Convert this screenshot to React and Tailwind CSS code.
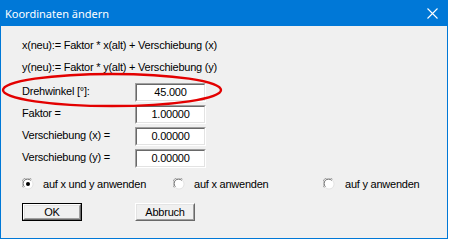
import React from "react";

function Field({ value }) {
  return (
    <div className="w-[71px] h-[19px] border border-t-[#a0a0a0] border-l-[#a0a0a0] border-b-white border-r-white">
      <div className="w-full h-full border border-t-[#696969] border-l-[#696969] border-b-[#e3e3e3] border-r-[#e3e3e3] bg-white flex items-center justify-center text-[11px] leading-none text-black">
        {value}
      </div>
    </div>
  );
}

function Radio({ checked }) {
  return (
    <svg width="12" height="12" viewBox="0 0 12 12" className="shrink-0">
      <circle cx="6" cy="6" r="5" fill="#ffffff" />
      <path d="M1.3 9.5 A5.5 5.5 0 0 1 9.5 1.3" fill="none" stroke="#a0a0a0" strokeWidth="1" />
      <path d="M2.4 8.7 A4.4 4.4 0 0 1 8.7 2.4" fill="none" stroke="#696969" strokeWidth="1" />
      <path d="M9.6 2.6 A4.4 4.4 0 0 1 2.6 9.6" fill="none" stroke="#e3e3e3" strokeWidth="1" />
      {checked && <circle cx="6" cy="6" r="2" fill="#000000" />}
    </svg>
  );
}

function Button({ label, isDefault }) {
  const inner = (
    <div className="w-full h-full border border-t-white border-l-white border-b-[#696969] border-r-[#696969]">
      <div className="w-full h-full border border-t-[#e3e3e3] border-l-[#e3e3e3] border-b-[#a0a0a0] border-r-[#a0a0a0] bg-[#f0f0f0] flex items-center justify-center text-[11px] leading-none text-black">
        {label}
      </div>
    </div>
  );
  return isDefault ? (
    <div className="w-[60px] h-[18px] border border-black">{inner}</div>
  ) : (
    <div className="w-[60px] h-[18px]">{inner}</div>
  );
}

function Row({ label, value }) {
  return (
    <div className="flex items-center h-[19px]">
      <div className="w-[113px] pb-[3px] leading-none">{label}</div>
      <Field value={value} />
    </div>
  );
}

export default function App() {
  return (
    <div className="w-[449px] h-[241px] bg-white">
      <div className="w-[448px] h-[239px] border border-[#0078d7] flex flex-col">
        <div className="h-[25px] bg-[#0078d7] flex items-center justify-between pl-[4px] pr-[9px] shrink-0">
          <span className="text-white text-[11px] leading-none pb-[1px]" style={{ fontFamily: '"Noto Sans", "Open Sans", sans-serif' }}>
            Koordinaten ändern
          </span>
          <svg width="11" height="11" viewBox="0 0 11 11">
            <path d="M0.5 0.5 L10.5 10.5 M10.5 0.5 L0.5 10.5" stroke="#ffffff" strokeWidth="1.1" />
          </svg>
        </div>
        <div
          className="flex-1 bg-[#f0f0f0] relative pl-[21px] flex flex-col text-[11px] tracking-[-0.23px] text-black"
          style={{ fontFamily: '"Liberation Sans", Arial, sans-serif' }}
        >
          <div className="h-[22px] mt-[8px] flex items-center leading-none">x(neu):= Faktor * x(alt) + Verschiebung (x)</div>
          <div className="h-[22px] flex items-center leading-none">y(neu):= Faktor * y(alt) + Verschiebung (y)</div>
          <div className="mt-[5px] flex flex-col gap-[3px]">
            <Row label="Drehwinkel [°]:" value="45.000" />
            <Row label="Faktor =" value="1.00000" />
            <Row label="Verschiebung (x) =" value="0.00000" />
            <Row label="Verschiebung (y) =" value="0.00000" />
          </div>
          <div className="mt-[8px] h-[16px] flex items-center">
            <div className="w-[151px] flex items-center gap-[9px]">
              <Radio checked />
              <span className="leading-none">auf x und y anwenden</span>
            </div>
            <div className="w-[150px] flex items-center gap-[9px]">
              <Radio />
              <span className="leading-none">auf x anwenden</span>
            </div>
            <div className="flex items-center gap-[10px]">
              <Radio />
              <span className="leading-none">auf y anwenden</span>
            </div>
          </div>
          <div className="mt-[11px] flex gap-[53px]">
            <Button label="OK" isDefault />
            <Button label="Abbruch" />
          </div>
          <svg className="absolute left-0 top-0 pointer-events-none" width="446" height="212" viewBox="0 0 446 212">
            <ellipse cx="111" cy="64" rx="109" ry="16" fill="none" stroke="#e30000" strokeWidth="2.4" />
          </svg>
        </div>
      </div>
    </div>
  );
}
